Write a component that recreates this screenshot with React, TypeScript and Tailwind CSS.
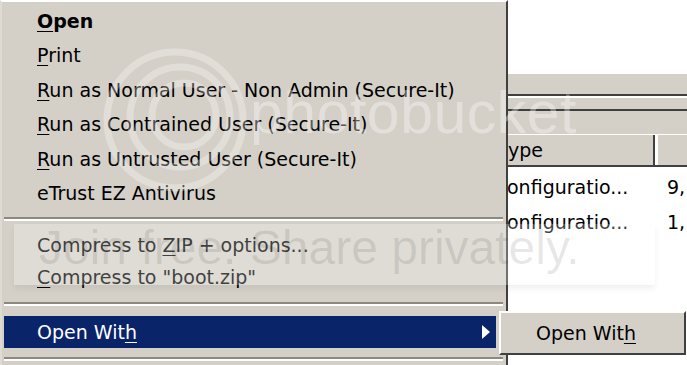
export default function App() {
  const font = { fontFamily: '"DejaVu Sans", Tahoma, sans-serif' };

  const Sep = () => (
    <div className="w-full">
      <div className="h-[2px] bg-[#8c8984]" />
      <div className="h-[2px] bg-white" />
    </div>
  );

  return (
    <div
      className="relative w-[687px] h-[365px] overflow-hidden bg-white flex text-[19px] text-black"
      style={font}
    >
      {/* context menu */}
      <div className="w-[508px] h-full shrink-0 overflow-hidden bg-[#d4d0c8] border-t-2 border-t-white border-l-2 border-l-[#dedbd5] border-r-2 border-r-[#404040] pt-[2px] pl-[2px] pr-[3px] flex flex-col">
        <div className="h-[34px] shrink-0 flex items-center pl-[33px] font-bold">
          <span>
            <u className="underline-offset-[3px]">O</u>pen
          </span>
        </div>
        <div className="h-[35px] shrink-0 flex items-center pl-[33px]">
          <span>
            <u className="underline-offset-[3px]">P</u>rint
          </span>
        </div>
        <div className="h-[34px] shrink-0 flex items-center pl-[33px]">
          <span>
            <u className="underline-offset-[3px]">R</u>un as Normal User - Non Admin (Secure-It)
          </span>
        </div>
        <div className="h-[35px] shrink-0 flex items-center pl-[33px]">
          <span>
            <u className="underline-offset-[3px]">R</u>un as Contrained User (Secure-It)
          </span>
        </div>
        <div className="h-[34px] shrink-0 flex items-center pl-[33px]">
          <span>
            <u className="underline-offset-[3px]">R</u>un as Untrusted User (Secure-It)
          </span>
        </div>
        <div className="h-[34px] shrink-0 flex items-center pl-[33px]">eTrust EZ Antivirus</div>
        <div className="h-[19px] shrink-0 pt-[7px]">
          <Sep />
        </div>
        <div className="h-[32px] shrink-0 flex items-center pl-[33px]">
          <span>
            Compress to <u className="underline-offset-[3px]">Z</u>IP + options...
          </span>
        </div>
        <div className="h-[32px] shrink-0 flex items-center pl-[33px]">
          <span>
            <u className="underline-offset-[3px]">C</u>ompress to "boot.zip"
          </span>
        </div>
        <div className="h-[23px] shrink-0 pt-[9px]">
          <Sep />
        </div>
        <div className="h-[32px] shrink-0 mr-[7px] bg-[#0a246a] text-white flex items-center pl-[33px] pr-[6px]">
          <span className="flex-1">
            Open Wit<u className="underline-offset-[3px]">h</u>
          </span>
          <svg width="8" height="14" viewBox="0 0 8 14">
            <path d="M0 0 L8 7 L0 14 Z" fill="white" />
          </svg>
        </div>
        <div className="h-[20px] shrink-0 pt-[9px]">
          <Sep />
        </div>
      </div>

      {/* explorer window behind */}
      <div className="flex-1 flex flex-col">
        <div className="h-[73px] bg-white" />
        <div className="h-[1px] bg-white" />
        <div className="h-[20px] bg-[#d4d0c8]" />
        <div className="h-[2px] bg-[#404040]" />
        <div className="h-[2px] bg-white" />
        <div className="h-[11px] bg-[#d4d0c8]" />
        <div className="h-[2px] bg-[#404040]" />
        <div className="h-[23px] bg-[#d4d0c8]" />
        <div className="h-[1px] bg-white" />
        <div className="h-[30px] bg-[#d4d0c8] flex">
          <div className="w-[147px] flex items-center border-r-2 border-r-[#404040]">ype</div>
          <div className="w-[3px] bg-white" />
          <div className="flex-1" />
        </div>
        <div className="h-[2px] bg-[#404040]" />
        <div className="flex-1 bg-white pt-[3px]">
          <div className="h-[35px] flex items-center">
            <span className="w-[160px] -ml-[1px]">onfiguratio...</span>
            <span>9,</span>
          </div>
          <div className="h-[35px] flex items-center">
            <span className="w-[160px] -ml-[1px]">onfiguratio...</span>
            <span>1,</span>
          </div>
        </div>
      </div>

      {/* submenu */}
      <div className="absolute left-[499px] top-[311px] w-[187px] h-[44px] bg-[#d4d0c8] border-t-2 border-l-2 border-t-white border-l-white border-r-2 border-b-2 border-r-[#404040] border-b-[#404040] flex items-center pl-[35px]">
        <span>
          Open Wit<u className="underline-offset-[3px]">h</u>
        </span>
      </div>

      {/* photobucket watermark */}
      <div className="absolute inset-0 pointer-events-none">
        <svg className="absolute left-[100px] top-[45px]" width="150" height="150" viewBox="0 0 150 150">
          <g fill="none" stroke="white" strokeOpacity="0.3" strokeWidth="7">
            <circle cx="75" cy="75" r="68" />
            <circle cx="80" cy="72" r="50" />
            <circle cx="84" cy="70" r="32" />
          </g>
        </svg>
        <div
          className="absolute left-[250px] top-[84px] text-[59px] leading-none tracking-[0.5px] text-white/35"
          style={{ fontFamily: '"Liberation Sans", sans-serif' }}
        >
          photobucket
        </div>
        <div className="absolute left-[14px] top-[224px] w-[641px] h-[61px] bg-white/25 shadow-[0_4px_6px_rgba(0,0,0,0.06)]" />
        <div
          className="absolute left-[39px] top-[224px] text-[48px] leading-none text-black/[0.1]"
          style={{ fontFamily: '"Liberation Sans", sans-serif' }}
        >
          Join free. Share privately.
        </div>
      </div>
    </div>
  );
}
